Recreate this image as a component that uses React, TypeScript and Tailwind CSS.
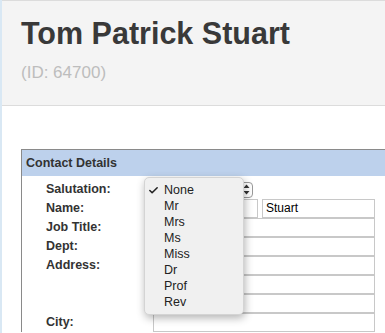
import { Check } from 'lucide-react'

const font = { fontFamily: '"Liberation Sans", Arial, sans-serif' }

const options = ['None', 'Mr', 'Mrs', 'Ms', 'Miss', 'Dr', 'Prof', 'Rev']

function Input({ value = '', className = 'w-[222px]' }: { value?: string; className?: string }) {
  return (
    <div className={`h-[19px] border border-[#c8c8c8] bg-white px-[3px] text-[12px] leading-[17px] text-black ${className}`}>
      {value}
    </div>
  )
}

function Label({ children }: { children?: React.ReactNode }) {
  return <div className="flex h-[19px] items-center text-[12.5px] font-bold text-[#333]">{children}</div>
}

function SalutationMenu() {
  return (
    <div className="absolute left-[142px] top-[177px] z-10 w-[100px] rounded-[5px] border border-[#d4d4d4] bg-[#f0f0f0] py-[4px] shadow-[1px_3px_8px_rgba(0,0,0,0.3)]">
      {options.map((o, i) => (
        <div key={o} className="relative flex h-[16px] items-center pl-[19px] text-[12.5px] text-[#222]">
          {i === 0 && (
            <Check className="absolute left-[3px] top-[3px] h-[11px] w-[11px] text-[#222]" strokeWidth={3.4} />
          )}
          {o}
        </div>
      ))}
    </div>
  )
}

export default function App() {
  return (
    <div
      className="relative h-[333px] w-[385px] overflow-hidden border-l-2 border-[#d9e8f4] bg-white"
      style={font}
    >
      {/* Page header */}
      <div className="h-[106px] border-t border-b border-[#dcdcdc] bg-[#f4f4f4] pl-[19px] pt-[13px]">
        <h1 className="text-[30.5px] font-bold leading-[38px] text-[#393939]">Tom Patrick Stuart</h1>
        <div className="mt-[10px] text-[17px] leading-[22px] text-[#bdbdbd]">(ID: 64700)</div>
      </div>

      {/* Contact details panel */}
      <div className="ml-[19px] mt-[43px] w-[420px] border-l border-t border-[#8a8a8a]">
        <div className="flex h-[26px] items-center bg-[#bdd1ec] pl-[4px] text-[12.5px] font-bold text-[#333]">
          Contact Details
        </div>
        <div className="grid grid-cols-[131px_auto] pt-[4px]">
          <div className="pl-[24px]">
            <Label>Salutation:</Label>
            <Label>Name:</Label>
            <Label>Job Title:</Label>
            <Label>Dept:</Label>
            <Label>Address:</Label>
            <Label />
            <Label />
            <Label>City:</Label>
          </div>
          <div>
            <div className="flex h-[19px] items-center">
              <div className="flex h-[16px] w-[100px] justify-end rounded-[4px] border border-[#9a9a9a] bg-white">
                <div className="flex w-[12px] items-center justify-center">
                  <svg width="7" height="11" viewBox="0 0 7 11">
                    <path d="M3.5 0.5 L6.5 4 H0.5 Z" fill="#333" />
                    <path d="M3.5 10.5 L6.5 7 H0.5 Z" fill="#333" />
                  </svg>
                </div>
              </div>
            </div>
            <div className="flex gap-[4px]">
              <Input className="w-[105px]" />
              <Input className="w-[113px]" value="Stuart" />
            </div>
            <Input />
            <Input />
            <Input />
            <Input />
            <Input />
            <Input />
          </div>
        </div>
      </div>

      <SalutationMenu />
    </div>
  )
}
